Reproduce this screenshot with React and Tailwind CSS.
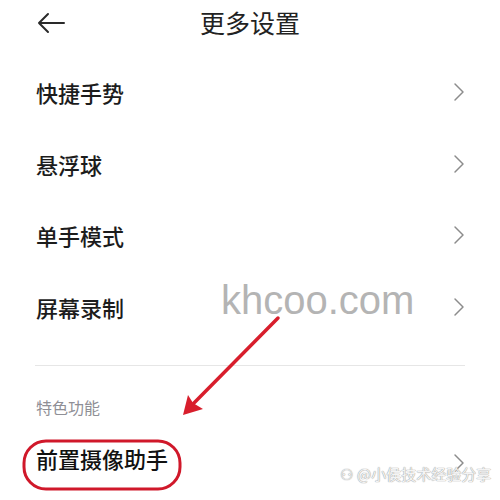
import { ChevronRight } from "lucide-react";

const font = { fontFamily: '"Noto Sans CJK SC", "Noto Sans", sans-serif' };

const items = ["快捷手势", "悬浮球", "单手模式", "屏幕录制"];

function Row({ label }) {
  return (
    <div className="flex h-[71.5px] items-center justify-between pl-[36px] pr-[25px]">
      <span className="text-[22px] font-medium leading-none text-[#1c1c1c]">{label}</span>
      <ChevronRight className="h-[32px] w-[32px] text-[#8c8c8c]" strokeWidth={1.1} />
    </div>
  );
}

export default function App() {
  return (
    <div className="relative h-[500px] w-[500px] overflow-hidden bg-white" style={font}>
      {/* header */}
      <div className="relative flex h-[45px] items-center justify-center">
        <svg className="absolute left-[36px] top-[12px]" width="30" height="22" viewBox="0 0 30 22">
          <path d="M28 11H3M12 2L3 11l9 9" fill="none" stroke="#2a2a2a" strokeWidth="2" strokeLinecap="round" strokeLinejoin="round" />
        </svg>
        <span className="text-[25px] leading-none text-[#222]">更多设置</span>
      </div>

      <div className="pt-[11.5px]">
        {items.map((label) => (
          <Row key={label} label={label} />
        ))}
      </div>

      <div className="mx-[35px] mt-[22px] border-t border-[#e6e6e6]" />

      <div className="pl-[36px] pt-[33px] text-[16px] leading-none text-[#8f8f96]">特色功能</div>

      <div className="mt-[22px] flex h-[42px] items-center justify-between pl-[36px] pr-[25px]">
        <span className="text-[22px] font-medium leading-none text-[#111]">前置摄像助手</span>
        <ChevronRight className="mt-[10px] h-[32px] w-[32px] text-[#8c8c8c]" strokeWidth={1.1} />
      </div>

      {/* overlays */}
      <div
        className="absolute left-[221px] top-[280px] text-[40px] leading-none text-[#b4b4b4]"
        style={{ fontFamily: '"Liberation Sans", Arial, sans-serif' }}
      >
        khcoo.com
      </div>

      <svg className="absolute left-0 top-0" width="500" height="500" viewBox="0 0 500 500">
        <line x1="278" y1="318" x2="192" y2="405" stroke="#d81e2c" strokeWidth="3.5" strokeLinecap="round" />
        <path d="M183 415 L188 395 L193 403 L203 409 Z" fill="#d81e2c" />
        <rect x="24" y="441" width="156" height="48" rx="22" ry="22" fill="none" stroke="#d0182a" strokeWidth="3" />
      </svg>

      <div
        className="absolute left-[340px] top-[466px] flex items-center gap-[4px] text-[15px] leading-none text-[#f4f4f4]"
        style={{ textShadow: "0 0 1px #9a9a9a, 0 0 1px #9a9a9a" }}
      >
        <span>⚇</span>
        <span>@小侯技术经验分享</span>
      </div>
    </div>
  );
}
